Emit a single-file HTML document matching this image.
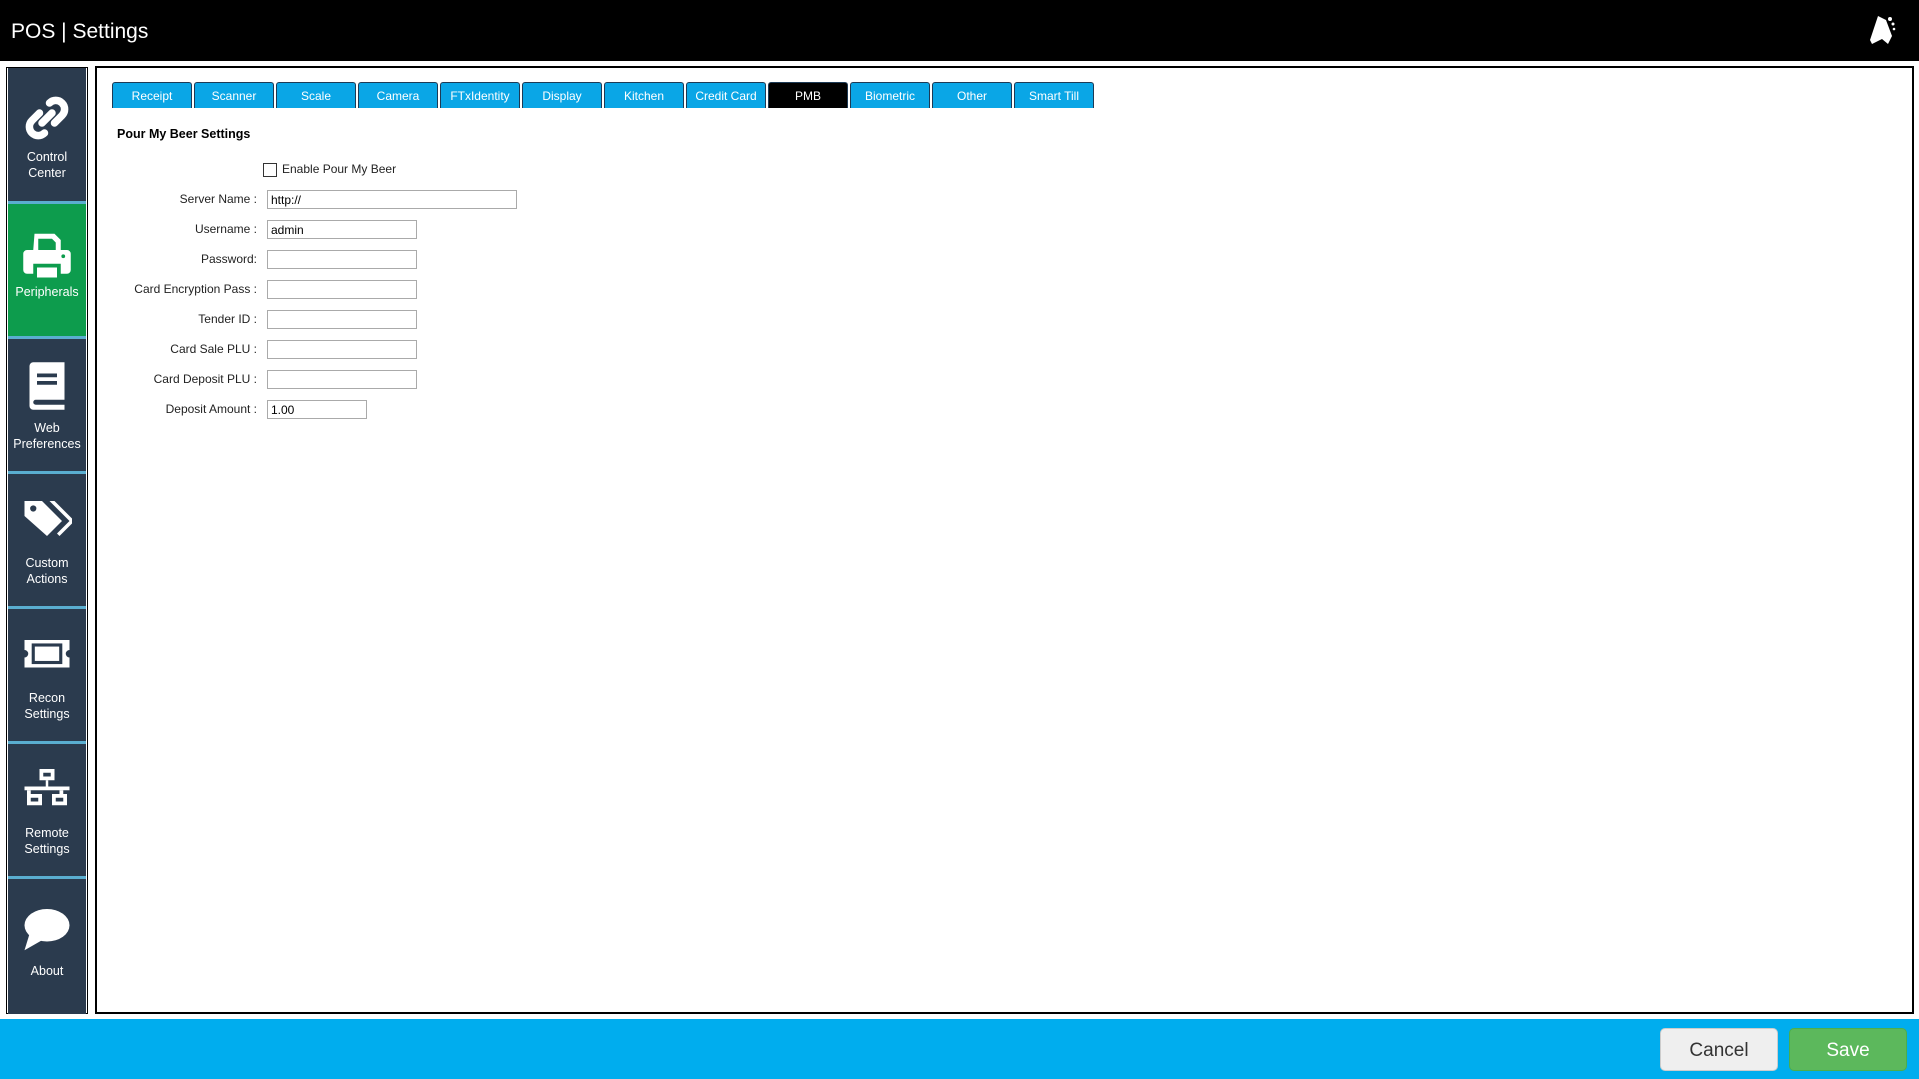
<!DOCTYPE html>
<html><head><meta charset="utf-8"><style>
*{margin:0;padding:0;box-sizing:border-box}
body{width:1919px;height:1079px;background:#fff;font-family:"Liberation Sans",sans-serif;position:relative;overflow:hidden}
.top{position:absolute;left:0;top:0;width:1919px;height:61px;background:#000;color:#fff}
.top .t{position:absolute;left:11px;top:20px;font-size:21px}
.side{position:absolute;left:6px;top:67px;width:82px;height:947px;border:1px solid #000;background:#fff}
.item{position:absolute;left:1px;width:78px;background:#2b3b4e;border-bottom:3px solid #5aaed0;color:#fff;text-align:center;font-size:12.5px;line-height:16px}
.item.g{background:#0d9c4d}
.item svg{position:absolute;left:14px;width:50px;height:50px}
.item .l{position:absolute;left:0;right:0}
.main{position:absolute;left:95px;top:66px;width:1819px;height:948px;border:2px solid #000}
.tab{position:absolute;top:82px;width:80px;height:26px;background:#0aa6e6;border:1px solid #1d3a55;border-bottom:none;border-radius:3px 3px 0 0;color:#fff;font-size:12px;text-align:center;line-height:27px}
.tab.a{background:#000}
.h{position:absolute;left:117px;top:127px;font-size:12.5px;font-weight:bold}
.lab{position:absolute;right:1662px;font-size:12px;color:#222;text-align:right;white-space:nowrap}
.inp{position:absolute;left:267px;height:19px;border:1px solid #aaa;font-size:12px;padding-left:3px;line-height:18px}
.bot{position:absolute;left:0;top:1019px;width:1919px;height:60px;background:#00adee}
.btn{position:absolute;top:1028px;height:43px;width:118px;border-radius:5px;font-size:19px;text-align:center;line-height:43px}
</style></head><body>
<div class="top"><div class="t">POS | Settings</div>
<svg style="position:absolute;left:1868px;top:14px" width="30" height="32" viewBox="0 0 30 32"><path d="M10 2 L18 6 L24 22 L20 30 L14 25 L4 30 L2 26 Z" fill="#fff"/><circle cx="22" cy="5" r="2" fill="#fff"/><circle cx="25" cy="10" r="1.5" fill="#fff"/><circle cx="26" cy="15" r="1.3" fill="#fff"/></svg>
</div>

<div class="side">
<div class="item" style="top:0;height:136px">
<svg style="top:25px" viewBox="0 0 40 40"><g fill="none" stroke="#fff" stroke-width="6" stroke-linecap="round"><path d="M22 8 a7 7 0 0 1 10 10 l-6 6"/><path d="M18 32 a7 7 0 0 1 -10 -10 l6 -6"/><path d="M16 24 l8 -8"/></g></svg>
<div class="l" style="top:81px">Control<br>Center</div></div>
<div class="item g" style="top:136px;height:135px">
<svg style="top:26px" viewBox="0 0 40 40"><path d="M10 3 h16 l5 5 v8 h5 a3 3 0 0 1 3 3 v13 a3 3 0 0 1 -3 3 h-5 v-8 h-22 v8 h-5 a3 3 0 0 1 -3 -3 v-13 a3 3 0 0 1 3 -3 h5 z M13 7 v9 h14 v-6 l-3 -3 z" fill="#fff" fill-rule="evenodd"/><rect x="12" y="30" width="16" height="8" fill="#fff"/><circle cx="33" cy="21" r="1.5" fill="#0d9c4d"/></svg>
<div class="l" style="top:80px">Peripherals</div></div>
<div class="item" style="top:271px;height:135px">
<svg style="top:22px" viewBox="0 0 40 40"><path d="M6 4 a3 3 0 0 1 3 -3 h25 v30 h-23 a1.5 1.5 0 0 0 0 4 h23 v4 h-25 a3 3 0 0 1 -3 -3 z" fill="#fff"/><rect x="12" y="10" width="16" height="3" fill="#2b3b4e"/><rect x="12" y="16" width="16" height="3" fill="#2b3b4e"/></svg>
<div class="l" style="top:81px">Web<br>Preferences</div></div>
<div class="item" style="top:406px;height:135px">
<svg style="top:22px" viewBox="0 0 40 40"><path d="M2 4 h14 l16 16 l-12 12 l-18 -16 z" fill="#fff"/><circle cx="9" cy="10" r="2.5" fill="#2b3b4e"/><path d="M22 4 h4 l16 16 l-12 12 l-2 -2 l10 -10 z" fill="#fff"/></svg>
<div class="l" style="top:81px">Custom<br>Actions</div></div>
<div class="item" style="top:541px;height:135px">
<svg style="top:21px" viewBox="0 0 40 40"><path d="M2 8 h36 v8 a3 3 0 0 0 0 6 v8 h-36 v-8 a3 3 0 0 0 0 -6 z" fill="#fff"/><rect x="9" y="12" width="22" height="14" fill="none" stroke="#2b3b4e" stroke-width="2.5"/></svg>
<div class="l" style="top:81px">Recon<br>Settings</div></div>
<div class="item" style="top:676px;height:135px">
<svg style="top:20px" viewBox="0 0 40 40"><rect x="14" y="4" width="12" height="9" fill="#fff"/><rect x="17" y="7" width="6" height="3" fill="#2b3b4e"/><rect x="19" y="13" width="2" height="6" fill="#fff"/><rect x="2" y="18" width="36" height="3" fill="#fff"/><rect x="4" y="21" width="3" height="4" fill="#fff"/><rect x="30" y="21" width="3" height="4" fill="#fff"/><rect x="4" y="24" width="12" height="9" fill="#fff"/><rect x="24" y="24" width="12" height="9" fill="#fff"/><rect x="7" y="27" width="6" height="3" fill="#2b3b4e"/><rect x="27" y="27" width="6" height="3" fill="#2b3b4e"/></svg>
<div class="l" style="top:81px">Remote<br>Settings</div></div>
<div class="item" style="top:811px;height:135px;border-bottom:none">
<svg style="top:25px" viewBox="0 0 40 40"><ellipse cx="20" cy="17" rx="18" ry="13" fill="#fff"/><path d="M6 24 L2 37 L16 29 Z" fill="#fff"/></svg>
<div class="l" style="top:84px">About</div></div>
</div>

<div class="main"></div>
<div class="tab" style="left:112px">Receipt</div>
<div class="tab" style="left:194px">Scanner</div>
<div class="tab" style="left:276px">Scale</div>
<div class="tab" style="left:358px">Camera</div>
<div class="tab" style="left:440px">FTxIdentity</div>
<div class="tab" style="left:522px">Display</div>
<div class="tab" style="left:604px">Kitchen</div>
<div class="tab" style="left:686px">Credit Card</div>
<div class="tab a" style="left:768px">PMB</div>
<div class="tab" style="left:850px">Biometric</div>
<div class="tab" style="left:932px">Other</div>
<div class="tab" style="left:1014px">Smart Till</div>

<div class="h">Pour My Beer Settings</div>
<div style="position:absolute;left:263px;top:163px;width:14px;height:14px;border:1px solid #333"></div>
<div style="position:absolute;left:282px;top:162px;font-size:12px;color:#222">Enable Pour My Beer</div>

<div class="lab" style="top:192px">Server Name :</div><div class="inp" style="top:190px;width:250px">http://</div>
<div class="lab" style="top:222px">Username :</div><div class="inp" style="top:220px;width:150px">admin</div>
<div class="lab" style="top:252px">Password:</div><div class="inp" style="top:250px;width:150px"></div>
<div class="lab" style="top:282px">Card Encryption Pass :</div><div class="inp" style="top:280px;width:150px"></div>
<div class="lab" style="top:312px">Tender ID :</div><div class="inp" style="top:310px;width:150px"></div>
<div class="lab" style="top:342px">Card Sale PLU :</div><div class="inp" style="top:340px;width:150px"></div>
<div class="lab" style="top:372px">Card Deposit PLU :</div><div class="inp" style="top:370px;width:150px"></div>
<div class="lab" style="top:402px">Deposit Amount :</div><div class="inp" style="top:400px;width:100px">1.00</div>

<div class="bot"></div>
<div class="btn" style="left:1660px;background:#efefef;color:#333;border:1px solid #ccc">Cancel</div>
<div class="btn" style="left:1789px;background:#5cb85c;color:#fff;border:1px solid #4cae4c">Save</div>
</body></html>
